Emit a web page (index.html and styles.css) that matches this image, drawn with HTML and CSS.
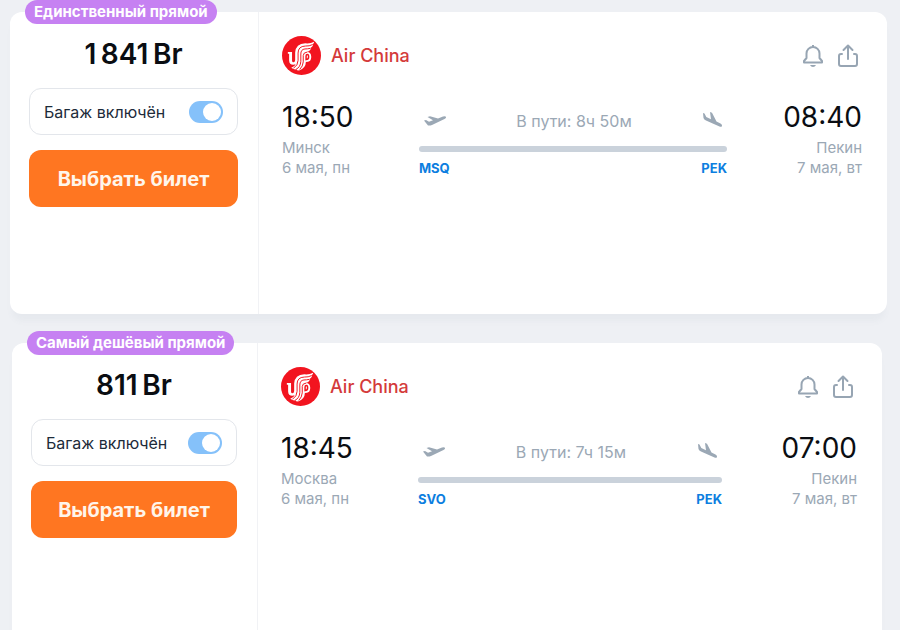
FILE: index.html
```html
<!DOCTYPE html>
<html lang="ru">
<head>
    <meta charset="UTF-8">
    <meta name="viewport" content="width=device-width, initial-scale=1.0">
    <title>Авиабилеты в Пекин</title>
    <link rel="stylesheet" href="styles.css">
</head>
<body>
    <!-- Shared icons -->
    <svg class="sprite" aria-hidden="true">
        <symbol id="air-china" viewBox="0 0 40 40">
            <circle cx="20" cy="20" r="20" fill="#f2141f"/>
            <path fill="#fff" d="M33 6Q29 8 24 7.500Q14 8 13.500 17V24.500Q13.300 27 11.800 27Q10.300 27 10.300 25V16.500H6V18.300H7.300V25Q7.500 29.500 11.500 29.500Q13 29.500 14 29Q13 31.500 9.500 32.500Q12 34.500 14.500 34.200Q15 35.500 17.500 35.500Q24.500 33 24.500 26.500Q30 27 30 21.500Q30 16.500 25.500 16.500Q28.500 15.500 30 12.800H28.500Q31.500 11 32 9H31Q33 7.500 33 6z"/>
            <g fill="none" stroke="#f2141f" stroke-width="1" stroke-linecap="round">
                <path d="M31 9Q28 10.500 24 10.300Q16.500 10.500 16.500 17.500V25Q16.500 30 12 33"/>
                <path d="M28.500 12.800Q26 13.300 23.500 13.300Q19.300 13.700 19.300 18.500V26Q19 32 14.500 34.200"/>
                <path d="M25.500 16.500Q21.800 16.800 21.800 20V26.500Q21.500 31 18.500 34"/>
                <path stroke-width="1.500" d="M24.700 24.200V20.500Q24.700 19 26 19Q27.300 19 27.300 21.500Q27.300 24 24.700 24.200z"/>
            </g>
        </symbol>
        <symbol id="bell" viewBox="0 0 24 24">
            <path fill="none" stroke="currentColor" stroke-width="2" stroke-linejoin="round" d="M12 1v2M5.500 9.500a6.500 6.500 0 0 1 13 0v4.500l2.500 3v1.500H3v-1.500l2.500-3z"/>
            <path fill="currentColor" d="M9 21h6q-1 2-3 2t-3-2z"/>
        </symbol>
        <symbol id="share" viewBox="0 0 24 24">
            <path fill="none" stroke="currentColor" stroke-width="2" stroke-linecap="round" stroke-linejoin="round" d="M12 15V2M7.500 6L12 1.500L16.500 6M6 10H5q-2 0-2 2v8q0 2 2 2h14q2 0 2-2V12q0-2-2-2h-1"/>
        </symbol>
        <symbol id="takeoff" viewBox="0 0 24 16">
            <path fill="currentColor" d="M1 7.500l2-.5l3 1.700l4-1.500L4.500 4l2.500-.8l8 2.300l5-1.900q2.500-.8 3 .3t-1.500 2L9 12q-2 .8-4 .5z"/>
        </symbol>
        <symbol id="landing" viewBox="0 0 24 20">
            <path fill="currentColor" d="M2 2l1.500.5l1.800 3.500l4.700 2.200L9 1l2 .8l4.500 8.700l4 2q2 1.200 1.500 2.500t-2.500.6L5 9.500q-2-1-2.500-2.500z"/>
        </symbol>
    </svg>

    <main class="tickets">
        <article class="ticket">
            <span class="badge">Единственный прямой</span>
            <div class="offer">
                <div class="price">1&thinsp;841&thinsp;Br</div>
                <label class="baggage">
                    Багаж включён
                    <input class="switch" type="checkbox" role="switch" checked>
                </label>
                <button class="buy" type="button">Выбрать билет</button>
            </div>
            <div class="flight">
                <header class="flight-header">
                    <svg class="logo" aria-hidden="true"><use href="#air-china"/></svg>
                    <span class="airline">Air China</span>
                    <button class="icon-button" type="button" aria-label="Следить за ценой"><svg class="icon"><use href="#bell"/></svg></button>
                    <button class="icon-button" type="button" aria-label="Поделиться"><svg class="icon"><use href="#share"/></svg></button>
                </header>
                <div class="segment">
                    <div class="point">
                        <div class="time">18:50</div>
                        <div>Минск</div>
                        <div>6 мая, пн</div>
                    </div>
                    <div class="route">
                        <div class="route-top">
                            <svg class="plane" aria-hidden="true"><use href="#takeoff"/></svg>
                            <span>В пути: 8ч 50м</span>
                            <svg class="plane plane-landing" aria-hidden="true"><use href="#landing"/></svg>
                        </div>
                        <div class="track"></div>
                        <div class="codes"><span>MSQ</span><span>PEK</span></div>
                    </div>
                    <div class="point point-end">
                        <div class="time">08:40</div>
                        <div>Пекин</div>
                        <div>7 мая, вт</div>
                    </div>
                </div>
            </div>
        </article>

        <article class="ticket ticket-small">
            <span class="badge">Самый дешёвый прямой</span>
            <div class="offer">
                <div class="price">811&thinsp;Br</div>
                <label class="baggage">
                    Багаж включён
                    <input class="switch" type="checkbox" role="switch" checked>
                </label>
                <button class="buy" type="button">Выбрать билет</button>
            </div>
            <div class="flight">
                <header class="flight-header">
                    <svg class="logo" aria-hidden="true"><use href="#air-china"/></svg>
                    <span class="airline">Air China</span>
                    <button class="icon-button" type="button" aria-label="Следить за ценой"><svg class="icon"><use href="#bell"/></svg></button>
                    <button class="icon-button" type="button" aria-label="Поделиться"><svg class="icon"><use href="#share"/></svg></button>
                </header>
                <div class="segment">
                    <div class="point">
                        <div class="time">18:45</div>
                        <div>Москва</div>
                        <div>6 мая, пн</div>
                    </div>
                    <div class="route">
                        <div class="route-top">
                            <svg class="plane" aria-hidden="true"><use href="#takeoff"/></svg>
                            <span>В пути: 7ч 15м</span>
                            <svg class="plane plane-landing" aria-hidden="true"><use href="#landing"/></svg>
                        </div>
                        <div class="track"></div>
                        <div class="codes"><span>SVO</span><span>PEK</span></div>
                    </div>
                    <div class="point point-end">
                        <div class="time">07:00</div>
                        <div>Пекин</div>
                        <div>7 мая, вт</div>
                    </div>
                </div>
            </div>
        </article>
    </main>
</body>
</html>
```
FILE: styles.css
```css
* {
    box-sizing: border-box;
}
body {
    margin: 0;
    background-color: #eef0f4;
    font-family: Inter, "Liberation Sans", sans-serif;
    color: #0a0d12;
}
button {
    border: none;
    font-family: inherit;
    cursor: pointer;
}
.sprite {
    display: none;
}
.tickets {
    display: flex;
    flex-direction: column;
    gap: 29px;
    padding: 12px 13px 0 10px;
}
.ticket {
    position: relative;
    display: grid;
    grid-template-columns: 249px 1fr;
    min-height: 302px;
    background-color: #fff;
    border-radius: 12px;
    box-shadow: 0 9px 6px -2px rgba(90, 120, 140, 0.05);
}
.ticket-small {
    grid-template-columns: 246px 1fr;
    margin: 0 5px 0 2px;
}
.badge {
    position: absolute;
    top: -12px;
    left: 15px;
    padding: 0 9px;
    border-radius: 12px;
    background-color: #c681f2;
    color: #fff;
    font-size: 15px;
    font-weight: 700;
    line-height: 24px;
    white-space: nowrap;
}
.offer {
    padding: 24px 20px 24px 19px;
    border-right: 1px solid #f1f2f5;
}
.price {
    margin-bottom: 16px;
    font-size: 28px;
    font-weight: 600;
    line-height: 36px;
    text-align: center;
}
.baggage {
    display: flex;
    align-items: center;
    justify-content: space-between;
    height: 47px;
    margin-bottom: 15px;
    padding: 0 14px;
    border: 1px solid #e3e6eb;
    border-radius: 12px;
    color: #1d2b3a;
    font-size: 16px;
    cursor: pointer;
}
.switch {
    appearance: none;
    display: flex;
    width: 34px;
    height: 22px;
    margin: 0;
    padding: 2px;
    border-radius: 11px;
    background-color: #c9d1da;
    cursor: pointer;
}
.switch::before {
    content: "";
    width: 18px;
    height: 18px;
    border-radius: 50%;
    background-color: #fff;
}
.switch:checked {
    justify-content: flex-end;
    background-color: #85c1fa;
}
.buy {
    display: block;
    width: 100%;
    height: 57px;
    padding: 0;
    border-radius: 12px;
    background-color: #ff7621;
    color: #fff5ea;
    font-size: 20px;
    font-weight: 700;
}
.flight {
    padding: 24px 25px 24px 23px;
}
.flight-header {
    display: flex;
    align-items: center;
    margin-bottom: 24px;
    padding-right: 2px;
}
.logo {
    width: 39px;
    height: 39px;
}
.airline {
    flex: 1;
    margin-left: 10px;
    color: #d43a3a;
    font-size: 18px;
    font-weight: 500;
}
.icon-button {
    display: flex;
    margin-left: 11px;
    padding: 0;
    background: none;
    color: #97a5b3;
}
.icon {
    width: 24px;
    height: 24px;
}
.segment {
    display: grid;
    grid-template-columns: 137px 1fr 135px;
}
.point {
    color: #9ba8b5;
    font-size: 15px;
    line-height: 20px;
}
.point-end {
    text-align: right;
}
.time {
    margin-bottom: 3px;
    color: #0a0d12;
    font-size: 28px;
    line-height: 36px;
}
.route-top {
    display: flex;
    align-items: center;
    justify-content: space-between;
    height: 44px;
    margin-bottom: 3px;
    padding: 0 2px 0 4px;
    color: #9ba8b5;
    font-size: 16px;
}
.plane {
    width: 24px;
    height: 16px;
}
.plane-landing {
    height: 20px;
}
.track {
    height: 6px;
    border-radius: 3px;
    background-color: #cad2db;
}
.codes {
    display: flex;
    justify-content: space-between;
    margin-top: 6px;
    color: #0c7ee0;
    font-size: 13px;
    font-weight: 700;
    line-height: 20px;
}
```
